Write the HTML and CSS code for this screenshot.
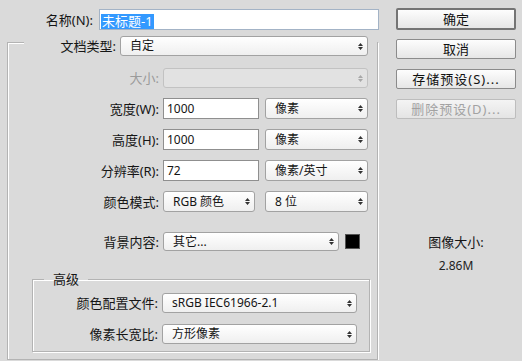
FILE: index.html
```html
<!DOCTYPE html>
<html lang="zh-CN">
<head>
    <meta charset="UTF-8">
    <title>新建</title>
    <link rel="stylesheet" href="styles.css">
</head>
<body>
    <div class="dialog">
        <div class="main">
            <div class="row name-row">
                <label class="lbl name-lbl">名称(N):</label>
                <div class="name-field"><span class="sel">未标题-1</span></div>
            </div>

            <div class="group">
                <div class="row type-row">
                    <label class="lbl type-lbl">文档类型:</label>
                    <div class="select type-select"><span>自定</span>
                        <svg class="arr" width="5" height="9" viewBox="0 0 5 9"><path d="M0 4L2.5 1L5 4Z M0 5L2.5 8L5 5Z"/></svg>
                    </div>
                </div>

                <div class="row size-row">
                    <label class="lbl off">大小:</label>
                    <div class="select off size-select"><span></span>
                        <svg class="arr" width="5" height="9" viewBox="0 0 5 9"><path d="M0 4L2.5 1L5 4Z M0 5L2.5 8L5 5Z"/></svg>
                    </div>
                </div>

                <div class="row gap-row">
                    <label class="lbl">宽度(W):</label>
                    <div class="input">1000</div>
                    <div class="select unit-select"><span>像素</span>
                        <svg class="arr" width="5" height="9" viewBox="0 0 5 9"><path d="M0 4L2.5 1L5 4Z M0 5L2.5 8L5 5Z"/></svg>
                    </div>
                </div>

                <div class="row gap-row">
                    <label class="lbl">高度(H):</label>
                    <div class="input">1000</div>
                    <div class="select unit-select"><span>像素</span>
                        <svg class="arr" width="5" height="9" viewBox="0 0 5 9"><path d="M0 4L2.5 1L5 4Z M0 5L2.5 8L5 5Z"/></svg>
                    </div>
                </div>

                <div class="row gap-row">
                    <label class="lbl">分辨率(R):</label>
                    <div class="input">72</div>
                    <div class="select unit-select"><span>像素/英寸</span>
                        <svg class="arr" width="5" height="9" viewBox="0 0 5 9"><path d="M0 4L2.5 1L5 4Z M0 5L2.5 8L5 5Z"/></svg>
                    </div>
                </div>

                <div class="row gap-row">
                    <label class="lbl">颜色模式:</label>
                    <div class="select mode-select"><span>RGB 颜色</span>
                        <svg class="arr" width="5" height="9" viewBox="0 0 5 9"><path d="M0 4L2.5 1L5 4Z M0 5L2.5 8L5 5Z"/></svg>
                    </div>
                    <div class="select unit-select bits"><span>8 位</span>
                        <svg class="arr" width="5" height="9" viewBox="0 0 5 9"><path d="M0 4L2.5 1L5 4Z M0 5L2.5 8L5 5Z"/></svg>
                    </div>
                </div>

                <div class="row bg-row">
                    <label class="lbl">背景内容:</label>
                    <div class="select bg-select"><span>其它...</span>
                        <svg class="arr" width="5" height="9" viewBox="0 0 5 9"><path d="M0 4L2.5 1L5 4Z M0 5L2.5 8L5 5Z"/></svg>
                    </div>
                    <div class="swatch"></div>
                </div>

                <fieldset class="adv">
                    <legend>高级</legend>
                    <div class="row adv-row first">
                        <label class="lbl adv-lbl">颜色配置文件:</label>
                        <div class="select adv-select"><span>sRGB IEC61966-2.1</span>
                            <svg class="arr" width="5" height="9" viewBox="0 0 5 9"><path d="M0 4L2.5 1L5 4Z M0 5L2.5 8L5 5Z"/></svg>
                        </div>
                    </div>
                    <div class="row adv-row">
                        <label class="lbl adv-lbl">像素长宽比:</label>
                        <div class="select adv-select"><span>方形像素</span>
                            <svg class="arr" width="5" height="9" viewBox="0 0 5 9"><path d="M0 4L2.5 1L5 4Z M0 5L2.5 8L5 5Z"/></svg>
                        </div>
                    </div>
                </fieldset>
            </div>
        </div>

        <div class="side">
            <button class="btn ok">确定</button>
            <button class="btn">取消</button>
            <button class="btn spaced">存储预设(S)...</button>
            <button class="btn spaced off" disabled>删除预设(D)...</button>

            <div class="info">
                <p class="info-title">图像大小:</p>
                <p class="info-size">2.86M</p>
            </div>
        </div>
    </div>
</body>
</html>
```

FILE: styles.css
```css
body{
    margin: 0;
    background-color: #dadada;
    font-family: "Noto Sans", "Noto Sans CJK SC", sans-serif;
    font-size: 13px;
    color: #151515;
}
.dialog{
    display: flex;
    align-items: flex-start;
}
.main{
    width: 372px;
    margin-left: 7px;
}
.row{
    display: flex;
    align-items: center;
    height: 21px;
}
.lbl{
    width: 151px;
    flex: none;
    margin-right: 4px;
    text-align: right;
    line-height: 16px;
    white-space: nowrap;
}
.lbl.off{
    color: #9b9b9b;
}

/* name */
.name-row{
    margin-top: 9px;
}
.name-lbl{
    width: 86px;
    margin-right: 6px;
}
.name-field{
    flex: 1;
    height: 21px;
    box-sizing: border-box;
    border: 1px solid #a3b3c6;
    background: #fff;
    padding: 2px 1px;
}
.sel{
    display: inline-block;
    background: #3399ff;
    color: #fff;
    line-height: 15px;
    padding: 0 1px;
}

/* outer group */
.group{
    width: 371px;
    box-sizing: border-box;
    margin-top: 12px;
    border: 1px solid #b3b3b3;
    box-shadow: inset 1px 1px 0 #fff, 1px 1px 0 #fff;
    padding-bottom: 7px;
}
.type-row{
    margin-top: -7px;
    margin-left: 16px;
    width: 353px;
    height: 20px;
    background: #dadada;
}
.type-lbl{
    width: 92px;
}
.type-select{
    width: 248px;
}

/* controls */
.select{
    height: 100%;
    box-sizing: border-box;
    border: 1px solid #a2a2a2;
    border-radius: 3px;
    background: linear-gradient(#ffffff, #efefef);
    display: flex;
    align-items: center;
    justify-content: space-between;
    padding: 0 4px 0 9px;
    font-size: 12px;
    line-height: 16px;
    white-space: nowrap;
    flex: none;
}
.arr{
    fill: #333;
    flex: none;
}
.select.off{
    background: #e2e2e2;
    border-color: #c2c2c2;
}
.select.off .arr{
    fill: #a8a8a8;
}
.input{
    width: 96px;
    height: 100%;
    box-sizing: border-box;
    border: 1px solid #8f8f8f;
    background: #fff;
    padding: 0 3px;
    font-size: 12px;
    line-height: 19px;
    flex: none;
}

.size-row{
    margin-top: 12px;
    height: 20px;
}
.size-select{
    width: 205px;
}
.gap-row{
    margin-top: 10px;
}
.unit-select{
    width: 103px;
    margin-left: 6px;
}
.mode-select{
    width: 92px;
}
.bits{
    margin-left: 10px;
}
.bg-row{
    margin-top: 20px;
    height: 19px;
}
.bg-select{
    width: 176px;
}
.swatch{
    width: 15px;
    height: 15px;
    box-sizing: border-box;
    margin-left: 6px;
    background: #000;
    border: 1px solid #555;
}

/* advanced */
.adv{
    margin: 20px 0 0 24px;
    width: 338px;
    box-sizing: border-box;
    border: 1px solid #b3b3b3;
    box-shadow: inset 1px 1px 0 #fff, 1px 1px 0 #fff;
    padding: 0 0 7px 0;
}
.adv legend{
    margin-left: 11px;
    padding: 0 9px;
    line-height: 16px;
}
.adv-row{
    height: 20px;
}
.adv-row.first{
    margin-top: 6px;
}
.adv-row + .adv-row{
    margin-top: 11px;
}
.adv-lbl{
    width: 125px;
}
.adv-select{
    width: 195px;
}

/* buttons */
.side{
    width: 120px;
    margin-left: 17px;
    padding-top: 8px;
    display: flex;
    flex-direction: column;
}
.btn{
    height: 20px;
    margin-top: 10px;
    padding: 0;
    box-sizing: border-box;
    border: 1px solid #8b8b8b;
    border-radius: 2px;
    background: linear-gradient(#fdfdfd, #e6e6e6);
    font-family: "Noto Sans", "Noto Sans CJK SC", sans-serif;
    font-size: 13px;
    line-height: 16px;
    color: #111;
}
.btn.ok{
    margin-top: 0;
    height: 22px;
    border: 2px solid #747474;
}
.btn.ok + .btn{
    margin-top: 9px;
}
.spaced{
    letter-spacing: 1px;
}
.btn.off{
    color: #a2a2a2;
    border-color: #bdbdbd;
    background: linear-gradient(#f4f4f4, #e4e4e4);
}
.info{
    margin-top: 115px;
    text-align: center;
}
.info p{
    margin: 0;
}
.info-title{
    line-height: 17px;
}
.info-size{
    margin-top: 7px !important;
    font-size: 12px;
    line-height: 16px;
    color: #222;
}
```
